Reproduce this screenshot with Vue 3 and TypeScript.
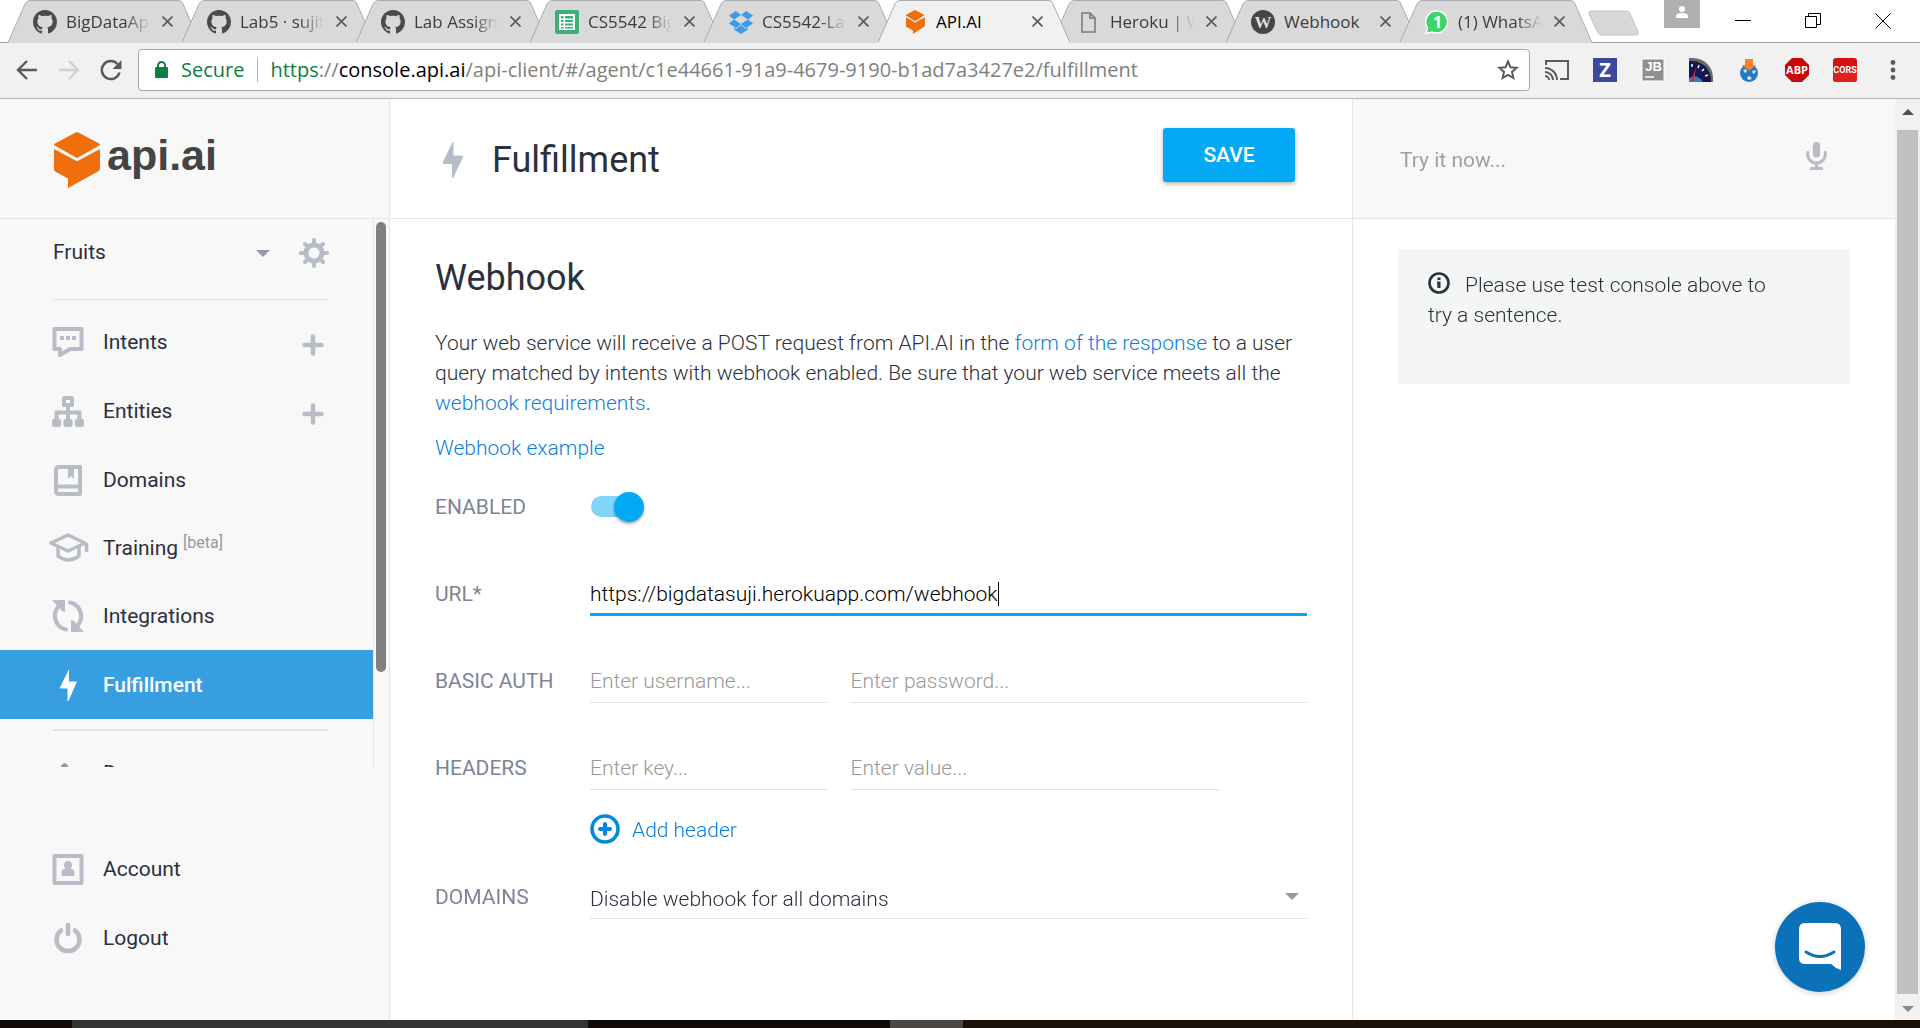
<script setup lang="ts">
import { onMounted, ref } from 'vue'

interface Tab {
  icon: 'github' | 'sheets' | 'dropbox' | 'apiai' | 'file' | 'webhook' | 'whatsapp'
  title: string
  active?: boolean
  fits?: boolean
}

interface NavItem {
  icon: string
  label: string
  add?: boolean
  beta?: boolean
  active?: boolean
}

const tabs: Tab[] = [
  { icon: 'github', title: 'BigDataApp' },
  { icon: 'github', title: 'Lab5 · sujitha' },
  { icon: 'github', title: 'Lab Assignment' },
  { icon: 'sheets', title: 'CS5542 Big D' },
  { icon: 'dropbox', title: 'CS5542-Lab' },
  { icon: 'apiai', title: 'API.AI', active: true, fits: true },
  { icon: 'file', title: 'Heroku | We' },
  { icon: 'webhook', title: 'Webhook', fits: true },
  { icon: 'whatsapp', title: '(1) WhatsApp' },
]

const navItems: NavItem[] = [
  { icon: 'intents', label: 'Intents', add: true },
  { icon: 'entities', label: 'Entities', add: true },
  { icon: 'domains', label: 'Domains' },
  { icon: 'training', label: 'Training', beta: true },
  { icon: 'integrations', label: 'Integrations' },
  { icon: 'bolt', label: 'Fulfillment', active: true },
]

const enabled = ref(true)
const url = ref('https://bigdatasuji.herokuapp.com/webhook')
const urlInput = ref<HTMLInputElement | null>(null)

onMounted(() => urlInput.value?.focus())
</script>

<template>
  <div class="window">
    <header class="chrome">
      <div class="tabstrip">
        <ul class="tabs">
          <li v-for="(tab, i) in tabs" :key="i" class="tab" :class="{ active: tab.active }">
            <svg class="tab-shape" viewBox="0 0 192 43" aria-hidden="true">
              <path class="tab-fill" d="M0 43 L17 4 Q19 1 22 1 H171 Q174 1 175 4 L192 43 Z" />
              <path class="tab-line" d="M0 42.5 L17 4 Q19 .5 22 .5 H171 Q174 .5 175 4 L192 42.5" />
            </svg>
            <svg v-if="tab.icon === 'github'" class="favicon" viewBox="0 0 16 16" aria-hidden="true">
              <path fill="#4a4a4a" d="M8 0C3.58 0 0 3.58 0 8c0 3.54 2.29 6.53 5.47 7.59.4.07.55-.17.55-.38 0-.19-.01-.82-.01-1.49-2.01.37-2.53-.49-2.69-.94-.09-.23-.48-.94-.82-1.13-.28-.15-.68-.52-.01-.53.63-.01 1.08.58 1.23.82.72 1.21 1.87.87 2.33.66.07-.52.28-.87.51-1.07-1.78-.2-3.64-.89-3.64-3.95 0-.87.31-1.59.82-2.15-.08-.2-.36-1.02.08-2.12 0 0 .67-.21 2.2.82.64-.18 1.32-.27 2-.27.68 0 1.36.09 2 .27 1.53-1.04 2.2-.82 2.2-.82.44 1.1.16 1.92.08 2.12.51.56.82 1.27.82 2.15 0 3.07-1.87 3.75-3.65 3.95.29.25.54.73.54 1.48 0 1.07-.01 1.93-.01 2.2 0 .21.15.46.55.38A8.013 8.013 0 0016 8c0-4.42-3.58-8-8-8z" />
            </svg>
            <svg v-else-if="tab.icon === 'sheets'" class="favicon" viewBox="0 0 24 24" aria-hidden="true">
              <rect width="24" height="24" rx="2" fill="#3db078" />
              <rect x="4" y="4" width="16" height="16" fill="#fff" />
              <path fill="#3db078" d="M6 6h2.500v2.500H6zM10 6h8v2.500h-8zM6 10h2.500v2H6zM10 10h8v2h-8zM6 13.500h2.500v2H6zM10 13.500h8v2h-8zM6 17h2.500v1.500H6zM10 17h8v1.500h-8z" />
            </svg>
            <svg v-else-if="tab.icon === 'dropbox'" class="favicon" viewBox="0 0 24 24" aria-hidden="true">
              <path fill="#3d9ae8" d="M7 1l5 4-7 4.500L0 5.500zM17 1l7 4.500-5 4L12 5zM5 9.500l7 4.500-5 4-7-4.500zM19 9.500l5 4-7 4.500-5-4zM12 15l5 4 2-1.200v1.700L12 24l-7-4.500v-1.700L7 19z" />
            </svg>
            <svg v-else-if="tab.icon === 'apiai'" class="favicon" viewBox="0 0 46 56" aria-hidden="true">
              <path fill="#ef6f0c" d="M23 0l21 11q2 1 0 2L23 26 2 13q-2-1 0-2zM2 17l21 12 23-12v21L18 56V47L2 39z" />
            </svg>
            <svg v-else-if="tab.icon === 'file'" class="favicon" viewBox="0 0 24 24" aria-hidden="true">
              <path fill="none" stroke="#7b7b7b" stroke-width="1.600" d="M5 3h8l5 5v14H5zM13 3v5h5" />
            </svg>
            <svg v-else-if="tab.icon === 'webhook'" class="favicon" viewBox="0 0 24 24" aria-hidden="true">
              <circle cx="12" cy="12" r="12" fill="#464646" />
              <text x="12" y="18" text-anchor="middle" font-family="Liberation Serif, serif" font-size="17" font-weight="700" fill="#ddd">W</text>
            </svg>
            <svg v-else class="favicon" viewBox="0 0 24 24" aria-hidden="true">
              <path d="M12.500 1A11 11 0 1 1 7 22L1 23.500 2.500 18A11 11 0 0 1 12.500 1z" fill="#3fd36b" stroke="#fff" stroke-width="1.500" />
              <text x="12.500" y="18" text-anchor="middle" font-family="Open Sans, sans-serif" font-size="16" font-weight="700" fill="#fff">1</text>
            </svg>
            <span class="tab-title" :class="{ fits: tab.fits }">{{ tab.title }}</span>
            <button class="tab-close" type="button" :aria-label="`Close ${tab.title}`">
              <svg viewBox="0 0 10 10" aria-hidden="true"><path d="M.5.5l9 9m0-9l-9 9" /></svg>
            </button>
          </li>
        </ul>
        <button class="new-tab" type="button" aria-label="New tab">
          <svg viewBox="0 0 52 26" aria-hidden="true">
            <path fill="#d8d8d8" stroke="#c4c4c4" d="M3 1h36q2 0 3 2l8 19q1 3-1 3H13q-2 0-3-2L1 4q-1-3 2-3z" />
          </svg>
        </button>
        <div class="window-controls">
          <button class="profile" type="button" aria-label="Profile">
            <svg viewBox="0 0 12 12" aria-hidden="true"><path fill="#fff" d="M6 0a3 3 0 1 1 0 6 3 3 0 0 1 0-6zM0 12V10q0-3 6-3t6 3v2z" /></svg>
          </button>
          <button type="button" aria-label="Minimize">
            <svg viewBox="0 0 16 16" aria-hidden="true"><path d="M0 7.500h16" /></svg>
          </button>
          <button type="button" aria-label="Restore">
            <svg viewBox="0 0 16 16" aria-hidden="true"><path d="M.5 3.500h11v11H.5zM3.500 3.500v-3h12v11h-4" /></svg>
          </button>
          <button type="button" aria-label="Close">
            <svg viewBox="0 0 16 16" aria-hidden="true"><path d="M.5.5l15 15m0-15l-15 15" /></svg>
          </button>
        </div>
      </div>

      <div class="toolbar">
        <div class="nav-buttons">
          <button type="button" aria-label="Back">
            <svg viewBox="0 0 22 22" aria-hidden="true"><path fill="none" stroke="#5a5a5a" stroke-width="2.400" d="M21 11H2.500M11 2l-9 9 9 9" /></svg>
          </button>
          <button type="button" aria-label="Forward" disabled>
            <svg viewBox="0 0 22 22" aria-hidden="true"><path fill="none" stroke="#cfcfcf" stroke-width="2.400" d="M1 11h18.500M11 2l9 9-9 9" /></svg>
          </button>
          <button type="button" aria-label="Reload">
            <svg viewBox="0 0 22 22" aria-hidden="true">
              <path fill="none" stroke="#5a5a5a" stroke-width="2.500" d="M19.500 13.500A9 9 0 1 1 17.500 5" />
              <path fill="#5a5a5a" d="M21.500 1v9h-9z" />
            </svg>
          </button>
        </div>
        <div class="omnibox">
          <svg class="lock" viewBox="0 0 13 17" aria-hidden="true">
            <rect y="6" width="13" height="11" rx="1" fill="#0b8043" />
            <path fill="none" stroke="#0b8043" stroke-width="2" d="M3 7V4.500a3.500 3.500 0 0 1 7 0V7" />
          </svg>
          <span class="secure">Secure</span>
          <div class="address" role="textbox" aria-label="Address"><span class="scheme">https</span>://<span class="host">console.api.ai</span>/api-client/#/agent/c1e44661-91a9-4679-9190-b1ad7a3427e2/fulfillment</div>
          <button class="star" type="button" aria-label="Bookmark">
            <svg viewBox="0 0 22 21" aria-hidden="true"><path fill="none" stroke="#5a5a5a" stroke-width="2" d="M11 2.500l2.500 5.700 6.200.6-4.700 4.100 1.400 6.100-5.400-3.200L5.600 19 7 12.900 2.300 8.800l6.200-.6z" /></svg>
          </button>
        </div>
        <div class="extensions">
          <button type="button" aria-label="Cast">
            <svg viewBox="0 0 24 24" aria-hidden="true">
              <path fill="none" stroke="#5a5a5a" stroke-width="2" d="M1 7V3h22v18h-8M0 18a4 4 0 0 1 4 4M0 14a8 8 0 0 1 8 8M0 10a12 12 0 0 1 12 12" />
            </svg>
          </button>
          <button type="button" aria-label="Zotero">
            <svg viewBox="0 0 24 24" aria-hidden="true">
              <rect width="24" height="24" fill="#3b4a9f" />
              <text x="12" y="19" text-anchor="middle" font-family="Open Sans, sans-serif" font-size="20" font-weight="700" fill="#fff">Z</text>
            </svg>
          </button>
          <button type="button" aria-label="JetBrains">
            <svg viewBox="0 0 24 24" aria-hidden="true">
              <rect x="1" y="1" width="22" height="22" fill="#8f8f8f" stroke="#fff" />
              <text x="12.500" y="13" text-anchor="middle" font-family="Liberation Sans, sans-serif" font-size="13" font-weight="700" fill="#fff">JB</text>
              <path stroke="#fff" stroke-width="1.500" d="M4 19h9" />
            </svg>
          </button>
          <button type="button" aria-label="Speed test">
            <svg viewBox="0 0 24 24" aria-hidden="true">
              <path fill="#6b6b6b" d="M0 0h4a20 20 0 0 1 20 20v4h-3L0 3z" />
              <path fill="#17174f" d="M0 3h3a19 19 0 0 1 19 19v2H0z" />
              <path fill="#2d7cc9" d="M0 20q8-5 14 4H0z" />
              <path stroke="#fff" stroke-width="1.500" d="M3 6v3M10 7l-1 3M15 11l-2 2M19 17l-3 1" />
              <path fill="#e0203a" d="M7 9L5 23H2z" />
            </svg>
          </button>
          <button type="button" aria-label="Downloader">
            <svg viewBox="0 0 24 24" aria-hidden="true">
              <circle cx="12" cy="15" r="9" fill="#2479c2" />
              <path fill="#cfe6f8" d="M6 12l3-1 1 3-2 1zM15 13l4-1-1 3-2 1zM10 19l3-1 2 3-4 1z" />
              <path fill="#f5822a" d="M8 1h8v6h3l-7 6-7-6h3z" />
            </svg>
          </button>
          <button type="button" aria-label="Adblock Plus">
            <svg viewBox="0 0 24 24" aria-hidden="true">
              <path fill="#c8090c" d="M7 0h10l7 7v10l-7 7H7l-7-7V7z" />
              <text x="12" y="16" text-anchor="middle" font-family="Open Sans, sans-serif" font-size="11" font-weight="700" fill="#fff">ABP</text>
            </svg>
          </button>
          <button type="button" aria-label="CORS">
            <svg viewBox="0 0 24 24" aria-hidden="true">
              <rect width="24" height="24" rx="3" fill="#d21212" />
              <rect y="13" width="24" height="11" rx="3" fill="#e01f1f" />
              <text x="12" y="15" text-anchor="middle" font-family="Roboto, sans-serif" font-size="9" font-weight="700" fill="#fff">CORS</text>
            </svg>
          </button>
          <button type="button" aria-label="Menu">
            <svg viewBox="0 0 24 24" aria-hidden="true"><g fill="#5a5a5a"><circle cx="12" cy="4.500" r="2.400" /><circle cx="12" cy="12" r="2.400" /><circle cx="12" cy="19.500" r="2.400" /></g></svg>
          </button>
        </div>
      </div>
    </header>

    <div class="page">
      <aside class="sidebar">
        <div class="logo">
          <svg viewBox="0 0 46 56" aria-hidden="true">
            <path fill="#ef6f0c" d="M21.500.600Q23-.200 24.500.600L45 11.500q2 1 0 2.200L23 26 1 13.700q-2-1.200 0-2.200zM0 17l23 12.200L46 17v19.500q0 2-2 3L14 56V46.500L2 40q-2-1-2-3z" />
          </svg>
          <span>api.ai</span>
        </div>
        <div class="side-scroll">
          <div class="side-content">
            <div class="agent">
              <select class="agent-select" aria-label="Agent"><option>Fruits</option></select>
              <svg class="caret" viewBox="0 0 14 7" aria-hidden="true"><path fill="#9299ad" d="M0 0h14L7 7z" /></svg>
              <button type="button" class="gear" aria-label="Agent settings">
                <svg viewBox="0 0 32 32" aria-hidden="true">
                  <circle cx="16" cy="16" r="8" fill="none" stroke="#b7bcc6" stroke-width="5" />
                  <path stroke="#b7bcc6" stroke-width="4" stroke-linecap="round" d="M16 6V3M16 26v3M6 16H3M26 16h3M9 9L7 7M23 23l2 2M9 23l-2 2M23 9l2-2" />
                </svg>
              </button>
            </div>
            <nav>
              <div v-for="item in navItems" :key="item.label" class="nav-row" :class="{ current: item.active }">
                <a href="#" class="nav-link">
                  <svg v-if="item.icon === 'intents'" class="nav-icon" viewBox="0 0 32 32" aria-hidden="true">
                    <path fill="none" stroke="#b7bcc6" stroke-width="4" stroke-linejoin="round" d="M2.500 3h27v20H18L8 29v-6H2.500z" />
                    <path fill="#b7bcc6" d="M8 10h4v4H8zM14 10h4v4h-4zM20 10h4v4h-4z" />
                  </svg>
                  <svg v-else-if="item.icon === 'entities'" class="nav-icon" viewBox="0 0 32 32" aria-hidden="true">
                    <path fill="none" stroke="#b7bcc6" stroke-width="4" stroke-linejoin="round" d="M12 3h8v7h-8zM16 11v14M4.500 25v-7.500h23V25" />
                    <g fill="#b7bcc6"><rect y="24" width="9" height="8" rx="2" /><rect x="11.500" y="24" width="9" height="8" rx="2" /><rect x="23" y="24" width="9" height="8" rx="2" /></g>
                  </svg>
                  <svg v-else-if="item.icon === 'domains'" class="nav-icon" viewBox="0 0 32 32" aria-hidden="true">
                    <path fill="none" stroke="#b7bcc6" stroke-width="4" stroke-linejoin="round" d="M7 3h21v27H7q-3 0-3-3V6q0-3 3-3zM4 22.500h24" />
                    <path fill="#b7bcc6" d="M16 3h6v12l-3-3-3 3z" />
                  </svg>
                  <svg v-else-if="item.icon === 'training'" class="nav-icon" viewBox="0 0 32 32" aria-hidden="true">
                    <path fill="none" stroke="#b7bcc6" stroke-width="3.500" stroke-linejoin="round" d="M-1 11L16 3l17 8-17 8zM6 14v10q10 8 21 0V14M34.500 11v9" />
                  </svg>
                  <svg v-else-if="item.icon === 'integrations'" class="nav-icon" viewBox="0 0 32 32" aria-hidden="true">
                    <path fill="none" stroke="#b7bcc6" stroke-width="4" stroke-linecap="round" d="M14 29.500A14 14 0 0 1 6 7M18 2.500A14 14 0 0 1 26 25" />
                    <path fill="#b7bcc6" d="M0 0h13v12l-3-1zM32 32H19V20l3 1z" />
                  </svg>
                  <svg v-else class="nav-icon" viewBox="0 0 32 32" aria-hidden="true"><path fill="#fff" d="M17 0L8 18.500q0 1 1 1h6.500V32h1L25 12.500h-8z" /></svg>
                  <span>{{ item.label }}<span v-if="item.beta" class="beta">[beta]</span></span>
                </a>
                <button v-if="item.add" type="button" class="add" :aria-label="`Add to ${item.label}`">
                  <svg viewBox="0 0 22 22" aria-hidden="true"><path stroke="#b7bcc6" stroke-width="4.500" stroke-linecap="round" d="M11 2.500v17M2.500 11h17" /></svg>
                </button>
              </div>
            </nav>
            <hr class="divider" />
            <div class="nav-row">
              <a href="#" class="nav-link">
                <svg class="nav-icon" viewBox="0 0 32 32" aria-hidden="true"><path fill="#9299ad" d="M9 9q4-6 7 0l8 19H4z" /></svg>
                <span>Docs</span>
              </a>
            </div>
          </div>
          <div class="side-bar-track"><div class="side-bar-thumb"></div></div>
        </div>
        <div class="side-footer">
          <div class="nav-row">
            <a href="#" class="nav-link">
              <svg class="nav-icon" viewBox="0 0 32 32" aria-hidden="true">
                <path fill="none" stroke="#b7bcc6" stroke-width="4" stroke-linejoin="round" d="M2.500 3h27v27h-27z" />
                <path fill="#b7bcc6" d="M16 8a4 4 0 0 1 2.500 7.200q4 1 4 5.300V23h-13v-2.500q0-4.300 4-5.300A4 4 0 0 1 16 8z" />
              </svg>
              <span>Account</span>
            </a>
          </div>
          <div class="nav-row">
            <a href="#" class="nav-link">
              <svg class="nav-icon" viewBox="0 0 32 32" aria-hidden="true">
                <path fill="none" stroke="#b7bcc6" stroke-width="4.500" stroke-linecap="round" d="M9 8.500a11.500 11.500 0 1 0 14 0M16 3v9" />
              </svg>
              <span>Logout</span>
            </a>
          </div>
        </div>
      </aside>

      <main class="main">
        <div class="main-header">
          <div class="heading">
            <svg viewBox="0 0 20 36" aria-hidden="true"><path fill="#b7bcc6" d="M9.500 0L0 20q-.500 2 1 2h8v14h1.200L20 15q.500-1.500-1-1.500h-8.500V0z" /></svg>
            <h1>Fulfillment</h1>
          </div>
          <button type="button" class="save">SAVE</button>
        </div>
        <form class="main-body" @submit.prevent>
          <h2>Webhook</h2>
          <p class="intro">
            Your web service will receive a POST request from API.AI in the <a href="#">form of the response</a> to a user
            query matched by intents with webhook enabled. Be sure that your web service meets all the
            <a href="#">webhook requirements</a>.
          </p>
          <p class="example"><a href="#">Webhook example</a></p>

          <div class="row">
            <label for="enabled">ENABLED</label>
            <input id="enabled" v-model="enabled" class="toggle" type="checkbox" />
          </div>
          <div class="row">
            <label for="url">URL*</label>
            <div class="url-field">
              <input id="url" ref="urlInput" v-model="url" type="text" spellcheck="false" />
            </div>
          </div>
          <div class="row">
            <label for="username">BASIC AUTH</label>
            <div class="pair">
              <input id="username" class="field first" type="text" placeholder="Enter username..." />
              <input class="field" type="password" placeholder="Enter password..." aria-label="Password" />
            </div>
          </div>
          <div class="row headers-row">
            <label for="key">HEADERS</label>
            <div class="pair with-remove">
              <input id="key" class="field first" type="text" placeholder="Enter key..." />
              <input class="field" type="text" placeholder="Enter value..." aria-label="Header value" />
            </div>
          </div>
          <div class="row add-row">
            <button type="button" class="add-header">
              <svg viewBox="0 0 30 30" aria-hidden="true">
                <circle cx="15" cy="15" r="13" fill="none" stroke="#0288e0" stroke-width="3.600" />
                <path stroke="#0288e0" stroke-width="4" stroke-linecap="round" d="M15 10v10M10 15h10" />
              </svg>
              <span>Add header</span>
            </button>
          </div>
          <div class="row">
            <label for="domains">DOMAINS</label>
            <div class="select-wrap">
              <select id="domains"><option>Disable webhook for all domains</option></select>
              <svg viewBox="0 0 14 7" aria-hidden="true"><path fill="#9a9a9a" d="M0 0h14L7 7z" /></svg>
            </div>
          </div>
        </form>
      </main>

      <section class="console">
        <div class="console-header">
          <input type="text" placeholder="Try it now..." aria-label="Try it now" />
          <button type="button" aria-label="Speak">
            <svg viewBox="0 0 20 27" aria-hidden="true">
              <rect x="6.500" width="7" height="15" rx="3.500" fill="#b7bcc6" />
              <path fill="none" stroke="#b7bcc6" stroke-width="3" stroke-linecap="round" d="M1.500 10v2a8.500 8.500 0 0 0 17 0v-2M10 20v5M5 25.500h10" />
            </svg>
          </button>
        </div>
        <div class="console-body">
          <p class="notice">
            <svg viewBox="0 0 22 22" aria-hidden="true">
              <circle cx="11" cy="11" r="9.500" fill="none" stroke="#2b303e" stroke-width="2.600" />
              <path fill="#2b303e" d="M9.500 5.500h3v2.500h-3zM9 9.500h3.500v6.500h-3z" />
            </svg>Please use test console above to try a sentence.
          </p>
        </div>
        <button type="button" class="chat" aria-label="Open chat">
          <svg viewBox="0 0 44 48" aria-hidden="true">
            <path fill="#fff" d="M7 0h30q6 0 6 6v41q-6-2-10-6H7q-6 0-6-6V6q0-6 6-6z" />
            <path fill="none" stroke="#0b71b9" stroke-width="3" stroke-linecap="round" d="M8 29q14 9 28 0" />
          </svg>
        </button>
      </section>

      <div class="scrollbar" aria-hidden="true">
        <svg viewBox="0 0 12 6"><path fill="#505050" d="M6 0l6 6H0z" /></svg>
        <div class="scroll-thumb"></div>
        <svg viewBox="0 0 12 6"><path fill="#8a8a8a" d="M0 0h12L6 6z" /></svg>
      </div>
    </div>

    <div class="taskbar" aria-hidden="true"><i></i><i></i><i></i><i></i><i></i></div>
  </div>
</template>

<style>
body {
  background: #fff;
}
</style>

<style scoped>
* {
  box-sizing: border-box;
}

.window {
  display: flex;
  flex-direction: column;
  height: 100vh;
  font-family: Roboto, sans-serif;
  font-size: 21px;
  line-height: 30px;
  color: #2b303e;
  overflow: hidden;
}

button {
  border: 0;
  padding: 0;
  background: none;
  font: inherit;
  color: inherit;
}

a {
  text-decoration: none;
}

svg {
  display: block;
  flex: none;
}

/* browser chrome */
.chrome {
  flex: none;
  font-family: "Open Sans", sans-serif;
  font-size: 20px;
}

.tabstrip {
  display: flex;
  height: 43px;
  border-bottom: 1px solid #9c9c9c;
  background: #fff;
}

.tabs {
  display: flex;
  flex: none;
  margin: 0;
  padding: 0 0 0 8px;
  list-style: none;
}

.tab {
  position: relative;
  display: flex;
  align-items: center;
  width: 192px;
  height: 43px;
  margin-right: -18px;
  padding-left: 25px;
}

.tab.active {
  z-index: 1;
}

.tab-shape {
  position: absolute;
  inset: 0;
  width: 192px;
  height: 43px;
}

.tab-fill {
  fill: #d9d9d9;
}

.tab-line {
  fill: none;
  stroke: #ababab;
}

.active .tab-fill {
  fill: #f1f1f1;
}

.favicon {
  position: relative;
  width: 24px;
  height: 24px;
}

.tab-title {
  position: relative;
  width: 84px;
  margin-left: 9px;
  overflow: hidden;
  white-space: nowrap;
  font-size: 17px;
  line-height: 24px;
  color: #3c3c3c;
  mask-image: linear-gradient(to right, #000 70%, transparent);
}

.tab-title.fits {
  mask-image: none;
}

.active .tab-title {
  color: #000;
}

.tab-close {
  position: relative;
  margin-left: 12px;
}

.tab-close svg {
  width: 11px;
  height: 11px;
  stroke: #5a5a5a;
  stroke-width: 1.5;
}

.new-tab {
  margin: 10px 0 0 14px;
  align-self: flex-start;
}

.new-tab svg {
  width: 52px;
  height: 26px;
}

.window-controls {
  display: flex;
  align-items: flex-start;
  margin-left: auto;
  padding-right: 29px;
}

.window-controls button {
  padding-top: 13px;
  margin-left: 54px;
}

.window-controls svg {
  width: 16px;
  height: 16px;
  fill: none;
  stroke: #000;
}

.window-controls .profile {
  display: flex;
  justify-content: center;
  width: 36px;
  height: 28px;
  margin-left: 0;
  padding-top: 6px;
  background: #b0b0b0;
}

.window-controls .profile + button {
  margin-left: 35px;
}

.window-controls .profile svg {
  width: 12px;
  height: 12px;
  stroke: none;
}

.toolbar {
  display: flex;
  align-items: center;
  height: 56px;
  padding: 0 15px 2px 16px;
  border-bottom: 1px solid #b4b4b4;
  background: #f1f1f1;
}

.nav-buttons {
  display: flex;
  gap: 20px;
  width: 122px;
}

.nav-buttons svg {
  width: 22px;
  height: 22px;
}

.omnibox {
  display: flex;
  align-items: center;
  flex: 1;
  height: 42px;
  padding: 0 10px 0 16px;
  border: 1px solid #a6a6a6;
  border-radius: 4px;
  background: #fff;
}

.lock {
  width: 13px;
  height: 17px;
}

.secure {
  margin-left: 13px;
  padding-right: 13px;
  border-right: 1px solid #b4b4b4;
  line-height: 24px;
  color: #0b8043;
}

.address {
  flex: 1;
  margin-left: 12px;
  white-space: nowrap;
  color: #808080;
}

.scheme {
  color: #0b8043;
}

.host {
  color: #000;
}

.star svg {
  width: 22px;
  height: 21px;
}

.extensions {
  display: flex;
  gap: 24px;
  margin-left: 15px;
}

.extensions svg {
  width: 24px;
  height: 24px;
}

/* page */
.page {
  flex: 1;
  display: grid;
  grid-template-columns: 390px minmax(0, 963fr) minmax(0, 542fr) 25px;
  min-height: 0;
  background: #fff;
}

.sidebar {
  display: flex;
  flex-direction: column;
  min-height: 0;
  border-right: 1px solid #e5e5e5;
  background: #f8f8f8;
}

.logo {
  display: flex;
  flex: none;
  gap: 7px;
  height: 120px;
  padding: 33px 0 0 54px;
  border-bottom: 1px solid #e5e5e5;
  font: 700 43px/46px "Liberation Sans", Arial, sans-serif;
  color: #444;
}

.logo svg {
  width: 46px;
  height: 56px;
}

.side-scroll {
  display: flex;
  flex: 1;
  min-height: 0;
  overflow: hidden;
}

.side-content {
  flex: 1;
  border-right: 1px solid #e5e5e5;
}

.agent {
  position: relative;
  display: flex;
  align-items: center;
  height: 81px;
  margin: 0 45px 7px 53px;
  padding-bottom: 12px;
  border-bottom: 1px solid #e0e0e0;
}

.agent-select {
  flex: 1;
  appearance: none;
  border: 0;
  padding: 0 0 3px;
  background: none;
  font: 400 21px/30px Roboto, sans-serif;
  color: #2b303e;
}

.caret {
  width: 14px;
  height: 7px;
  margin-right: 28px;
}

.gear {
  margin-right: -2px;
}

.gear svg {
  width: 32px;
  height: 32px;
}

.nav-row {
  display: flex;
  align-items: center;
  height: 69px;
  padding: 0 49px 0 52px;
}

nav .nav-row:nth-child(n + 4):not(.current) {
  height: 68px;
}

.nav-link {
  display: flex;
  flex: 1;
  align-items: center;
  gap: 19px;
  color: #2b303e;
}

.nav-icon {
  width: 32px;
  height: 32px;
  overflow: visible;
}

.beta {
  margin-left: 5px;
  vertical-align: 7px;
  font-size: 16px;
  line-height: 16px;
  color: #9299ad;
}

.add {
  padding-top: 7px;
}

.add svg {
  width: 22px;
  height: 22px;
}

.current {
  background: #379fe0;
}

.current .nav-link {
  color: #fff;
  font-weight: 500;
}

.divider {
  height: 2px;
  margin: 10px 45px 7px 53px;
  border: 0;
  background: #e4e4e4;
}

.side-bar-track {
  width: 15px;
  padding: 3px 3px 0 2px;
}

.side-bar-thumb {
  height: 450px;
  border-radius: 5px;
  background: #808080;
}

.side-footer {
  flex: none;
  padding: 67px 0 48px;
}

.main {
  border-right: 1px solid #e5e5e5;
}

.main-header {
  display: flex;
  justify-content: space-between;
  height: 120px;
  padding: 29px 57px 0 53px;
  border-bottom: 1px solid #e5e5e5;
}

.heading {
  display: flex;
  align-items: center;
  gap: 29px;
  height: 63px;
}

.heading svg {
  width: 20px;
  height: 36px;
}

h1,
h2 {
  margin: 0;
  font-size: 36px;
  line-height: 44px;
  font-weight: 400;
}

.save {
  width: 132px;
  height: 54px;
  border-radius: 3px;
  background: #03a9f4;
  box-shadow: 0 2px 5px rgba(0, 0, 0, 0.3);
  font-weight: 500;
  color: #fff;
}

.main-body {
  padding: 37px 45px 0;
}

.intro {
  margin: 28px 0 0;
  font-weight: 300;
}

.example {
  margin: 15px 0 29px;
  font-weight: 300;
}

p a,
.add-header {
  color: #0b7fdb;
}

.row {
  display: flex;
  min-height: 37px;
  margin-bottom: 50px;
}

.row label {
  width: 155px;
  flex: none;
  color: #7d8594;
}

.field {
  flex: 1;
  min-width: 0;
  height: 37px;
  border: 0;
  border-bottom: 1px solid #e0e0e0;
  border-radius: 0;
  padding: 0 0 6px;
  background: none;
  outline: 0;
  font: 300 21px/30px Roboto, sans-serif;
  color: #000;
}

.field::placeholder {
  color: #999;
}

.url-field {
  flex: 1;
  min-width: 0;
  height: 37px;
  padding-top: 3px;
  border-bottom: 3px solid #03a9f4;
}

/* the right border stands in for a steady insertion caret */
.url-field input {
  display: block;
  field-sizing: content;
  max-width: 100%;
  height: 24px;
  border: 0;
  border-right: 1px solid #000;
  padding: 0;
  background: none;
  outline: 0;
  caret-color: transparent;
  font: 300 21px/24px Roboto, sans-serif;
  color: #000;
}

.pair {
  display: flex;
  flex: 1;
  gap: 24px;
}

.pair .first {
  flex: none;
  width: 33%;
}

.with-remove .field:last-child {
  margin-right: 87px;
}

.headers-row {
  margin-bottom: 24px;
}

.toggle {
  appearance: none;
  position: relative;
  width: 54px;
  height: 30px;
  margin: 0;
}

.toggle::before {
  content: "";
  position: absolute;
  inset: 4px 9px 5px 1px;
  border-radius: 11px;
  background: #81d4fa;
}

.toggle::after {
  content: "";
  position: absolute;
  right: 0;
  width: 30px;
  height: 30px;
  border-radius: 50%;
  background: #03a9f4;
  box-shadow: 0 2px 3px rgba(0, 0, 0, 0.35);
}

.add-row {
  margin-bottom: 36px;
  min-height: 32px;
  padding-left: 155px;
}

.add-header {
  display: flex;
  gap: 12px;
  line-height: 32px;
  font-weight: 300;
}

.add-header svg {
  width: 30px;
  height: 30px;
}

.select-wrap {
  position: relative;
  flex: 1;
}

.select-wrap select {
  display: block;
  width: 100%;
  height: 37px;
  appearance: none;
  border: 0;
  border-bottom: 1px solid #e0e0e0;
  border-radius: 0;
  padding: 2px 0 4px;
  background: none;
  font: 300 21px/30px Roboto, sans-serif;
  color: #2b303e;
}

.select-wrap svg {
  position: absolute;
  top: 11px;
  right: 8px;
  width: 14px;
  height: 7px;
}

.console {
  position: relative;
}

.console-header {
  display: flex;
  align-items: center;
  height: 120px;
  padding: 0 68px 0 47px;
  border-bottom: 1px solid #e5e5e5;
  background: #f8f8f8;
}

.console-header input {
  flex: 1;
  min-width: 0;
  border: 0;
  padding: 2px 0 0;
  background: none;
  font: 400 21px/30px Roboto, sans-serif;
}

.console-header input::placeholder {
  color: #a0a0a0;
}

.console-header button {
  padding-bottom: 6px;
}

.console-header svg {
  width: 21px;
  height: 28px;
}

.console-body {
  padding: 30px 45px;
}

.notice {
  min-height: 135px;
  margin: 0;
  padding: 21px 60px 21px 30px;
  background: #f3f6f5;
  font-weight: 300;
}

.notice svg {
  display: inline-block;
  width: 22px;
  height: 22px;
  margin-right: 15px;
  vertical-align: -2px;
}

.chat {
  position: absolute;
  right: 30px;
  bottom: 28px;
  display: flex;
  align-items: center;
  justify-content: center;
  width: 90px;
  height: 90px;
  border-radius: 50%;
  background: #0b71b9;
  box-shadow: 0 1px 6px rgba(0, 0, 0, 0.2);
}

.chat svg {
  width: 44px;
  height: 48px;
}

.scrollbar {
  display: flex;
  flex-direction: column;
  align-items: center;
  padding: 10px 2px 8px;
  background: #f1f1f1;
}

.scrollbar svg {
  width: 12px;
  height: 6px;
}

.scroll-thumb {
  flex: 1;
  width: 21px;
  margin: 15px 0 12px;
  background: #c1c1c1;
}

.taskbar {
  display: grid;
  flex: none;
  grid-template-columns: 72fr 516fr 302fr 73fr 957fr;
  height: 8px;
}

.taskbar i {
  background: #120a06;
}

.taskbar i:nth-child(2) {
  background: #333;
}

.taskbar i:nth-child(4) {
  background: #4b4543;
}

.taskbar i:nth-child(5) {
  background: #1b1109;
}
</style>
